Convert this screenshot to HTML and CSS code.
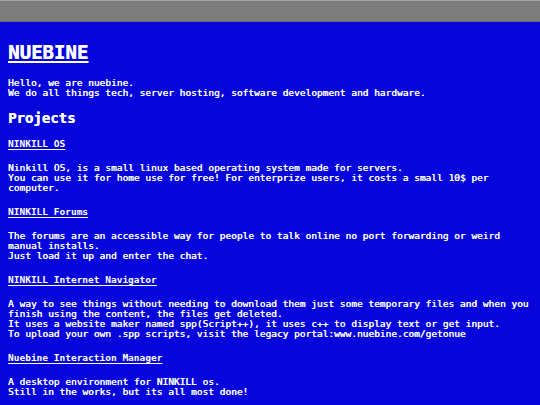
FILE: index.html
```html
<!DOCTYPE html>
<html lang="en">
<head>
<meta charset="utf-8">
<title>NUEBINE</title>
<link rel="stylesheet" href="styles.css">
</head>
<body>
<header class="bar"></header>
<main class="page">
  <h1 class="title">NUEBINE</h1>
  <p class="text">Hello, we are nuebine.<br>We do all things tech, server hosting, software development and hardware.</p>
  <h2 class="section-title">Projects</h2>
  <div class="projects">
    <h3 class="project-name">NINKILL OS</h3>
    <p class="text">Ninkill OS, is a small linux based operating system made for servers.<br>You can use it for home use for free! For enterprize users, it costs a small 10$ per computer.</p>
    <h3 class="project-name">NINKILL Forums</h3>
    <p class="text">The forums are an accessible way for people to talk online no port forwarding or weird manual installs.<br>Just load it up and enter the chat.</p>
    <h3 class="project-name">NINKILL Internet Navigator</h3>
    <p class="text">A way to see things without needing to download them just some temporary files and when you finish using the content, the files get deleted.<br>It uses a website maker named spp(Script++), it uses c++ to display text or get input.<br>To upload your own .spp scripts, visit the legacy portal:www.nuebine.com/getonue</p>
    <h3 class="project-name">Nuebine Interaction Manager</h3>
    <p class="text">A desktop environment for NINKILL os.<br>Still in the works, but its all most done!</p>
  </div>
</main>
</body>
</html>
```

FILE: styles.css
```css
html, body {
  margin: 0;
  padding: 0;
}

body {
  background: #0505dc;
  color: #ffffff;
  font-family: "DejaVu Sans Mono", "Liberation Mono", monospace;
  width: 540px;
  height: 405px;
  overflow: hidden;
}

.bar {
  box-sizing: border-box;
  height: 22px;
  background: #7c7c7c;
  border-top: 1px solid #a4a4a4;
  border-bottom: 1px solid #6c6c6c;
}

.page {
  display: flex;
  flex-direction: column;
  padding: 0 8px;
}

.title {
  margin: 20.4px 0 15.3px;
  font-size: 19px;
  line-height: 20px;
  font-weight: bold;
  text-decoration: underline;
  text-decoration-thickness: 2px;
  text-underline-offset: 2px;
  text-shadow: 0.5px 0 0 #ffffff;
}

.section-title {
  margin: 12.5px 0 12.5px;
  font-size: 14px;
  line-height: 16px;
  font-weight: bold;
  text-shadow: 0.4px 0 0 #ffffff;
}

.text {
  margin: 0;
  font-size: 9.5px;
  line-height: 10px;
  text-shadow: 0.35px 0 0 #ffffff;
}

.projects {
  display: flex;
  flex-direction: column;
  gap: 14px;
}

.project-name {
  margin: 0;
  font-size: 9.5px;
  line-height: 10px;
  font-weight: bold;
  text-decoration: underline;
  text-decoration-thickness: 1px;
  text-underline-offset: 1.5px;
}
```
